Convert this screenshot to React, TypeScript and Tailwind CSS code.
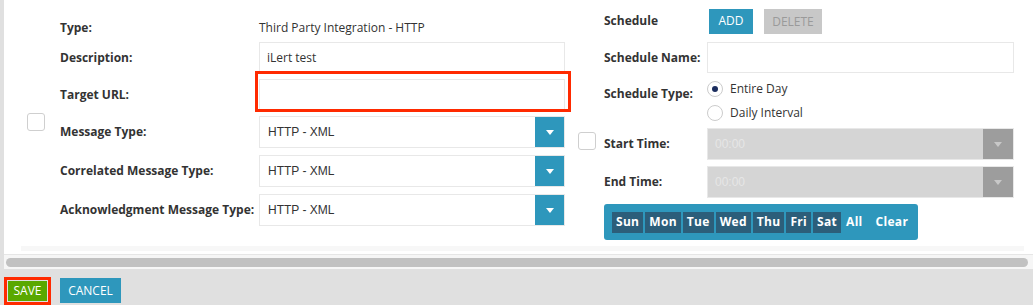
import type { ReactNode } from "react";

const font = "font-['Open_Sans',sans-serif]";

function Caret({ color = "#ffffff" }: { color?: string }) {
  return (
    <svg width="8" height="5" viewBox="0 0 8 5">
      <path d="M0 0 L8 0 L4 5 Z" fill={color} />
    </svg>
  );
}

function Checkbox() {
  return (
    <span className="block h-[18px] w-[18px] shrink-0 rounded-[3px] border border-[#cfcfcf] bg-white" />
  );
}

function Label({ children, width }: { children: ReactNode; width: string }) {
  return (
    <div className={`${width} shrink-0 text-[12px] font-bold text-[#333333]`}>
      {children}
    </div>
  );
}

function Select({ value }: { value: string }) {
  return (
    <div className="flex h-[32px] w-[306px] border border-[#e8e8e8] bg-white">
      <div className="flex flex-1 items-center pl-[8px] font-['Liberation_Sans',Arial,sans-serif] text-[12px] text-[#333333]">
        {value}
      </div>
      <div className="flex w-[29px] items-center justify-center bg-[#2e97bc]">
        <Caret />
      </div>
    </div>
  );
}

function TimeSelect() {
  return (
    <div className="flex h-[32px] w-[307px] border border-[#e8e8e8] bg-[#d5d5d5]">
      <div className="flex flex-1 items-center pl-[7px] font-['Liberation_Sans',Arial,sans-serif] text-[12px] text-[#e6e6e6]">
        00:00
      </div>
      <div className="flex w-[30px] items-center justify-center bg-[#9d9d9d]">
        <Caret color="#c8c8c8" />
      </div>
    </div>
  );
}

function Radio({ checked, label }: { checked?: boolean; label: string }) {
  return (
    <div className="flex h-[16px] items-center gap-[7px]">
      <span className="flex h-[16px] w-[16px] items-center justify-center rounded-full border border-[#cccccc] bg-white">
        {checked ? <span className="h-[6px] w-[6px] rounded-full bg-[#1b2d5e]" /> : null}
      </span>
      <span className="text-[12px] leading-[16px] text-[#333333]">{label}</span>
    </div>
  );
}

const days = ["Sun", "Mon", "Tue", "Wed", "Thu", "Fri", "Sat"];

export default function App() {
  return (
    <div className={`flex h-[305px] w-[1033px] flex-col bg-[#e0e0e0] ${font}`}>
      <div className="ml-[4px] flex h-[269px] flex-col bg-white">
        <div className="flex h-[246px]">
          {/* left form */}
          <div className="ml-[23px] mt-[113px] self-start">
            <Checkbox />
          </div>
          <div className="ml-[15px] flex flex-col pt-[14px]">
            <div className="flex h-[28px] items-center">
              <Label width="w-[199px]">Type:</Label>
              <span className="text-[12px] text-[#333333]">Third Party Integration - HTTP</span>
            </div>
            <div className="flex h-[32px] items-center">
              <Label width="w-[199px]">Description:</Label>
              <div className="flex h-[32px] w-[306px] items-center border border-[#e8e8e8] pl-[7px] text-[12px] text-[#333333]">
                iLert test
              </div>
            </div>
            <div className="mt-[5px] flex h-[32px] items-center">
              <Label width="w-[199px]">Target URL:</Label>
              <div className="relative h-[32px] w-[306px] border border-[#e8e8e8]">
                <div className="absolute -bottom-[2px] -left-[5px] -right-[7px] -top-[9px] border-[3px] border-[#ff2a00]" />
              </div>
            </div>
            <div className="mt-[5px] flex items-center">
              <Label width="w-[199px]">Message Type:</Label>
              <Select value="HTTP - XML" />
            </div>
            <div className="mt-[7px] flex items-center">
              <Label width="w-[199px]">Correlated Message Type:</Label>
              <Select value="HTTP - XML" />
            </div>
            <div className="mt-[7px] flex items-center">
              <Label width="w-[199px]">Acknowledgment Message Type:</Label>
              <Select value="HTTP - XML" />
            </div>
          </div>

          {/* right form */}
          <div className="ml-[13px] mt-[132px] self-start">
            <Checkbox />
          </div>
          <div className="ml-[8px] flex flex-col pt-[8px]">
            <div className="flex h-[26px] items-center">
              <Label width="w-[105px]">Schedule</Label>
              <button className="h-[25px] w-[44px] bg-[#2e97bc] text-[12px] text-white">ADD</button>
              <button className="ml-[11px] mt-[1px] h-[25px] w-[58px] bg-[#c8c8c8] text-[12px] text-[#9a9a9a]">
                DELETE
              </button>
            </div>
            <div className="mt-[8px] flex items-center">
              <Label width="w-[103px]">Schedule Name:</Label>
              <div className="h-[31px] w-[307px] border border-[#e8e8e8]" />
            </div>
            <div className="mt-[8px] flex items-start">
              <div className="mt-[4px] leading-[17px]">
                <Label width="w-[103px]">Schedule Type:</Label>
              </div>
              <div className="flex flex-col gap-[8px]">
                <Radio checked label="Entire Day" />
                <Radio label="Daily Interval" />
              </div>
            </div>
            <div className="mt-[7px] flex items-center">
              <Label width="w-[103px]">Start Time:</Label>
              <TimeSelect />
            </div>
            <div className="mt-[6px] flex items-center">
              <Label width="w-[103px]">End Time:</Label>
              <TimeSelect />
            </div>
            <div className="mt-[6px] flex h-[36px] w-[314px] items-center gap-[2px] rounded-[3px] bg-[#2e97bc] pl-[8px]">
              {days.map((d) => (
                <span
                  key={d}
                  className="flex h-[21px] items-center bg-[#2c5e7a] px-[4px] text-[12px] font-bold tracking-[0.3px] text-white"
                >
                  {d}
                </span>
              ))}
              <span className="flex h-[21px] items-center px-[3px] text-[12px] font-bold tracking-[0.3px] text-white">
                All
              </span>
              <span className="ml-[5px] flex h-[21px] items-center px-[3px] text-[12px] font-bold tracking-[0.3px] text-white">
                Clear
              </span>
            </div>
          </div>
        </div>
        <div className="ml-[17px] mr-[9px] h-[5px] bg-[#f7f7f7]" />
        <div className="mt-[3px] border-t border-[#e6e6e6]" />
        <div className="flex h-[14px] items-center bg-[#f6f6f6] pl-[2px] pr-[5px]">
          <div className="h-[9px] flex-1 rounded-full bg-[#c1c1c1]" />
        </div>
      </div>

      {/* footer */}
      <div className="flex items-start pl-[4px] pt-[8px]">
        <div className="flex border-[3px] border-[#ff2a00] p-[1px]">
          <button className="flex h-[20px] w-[39px] items-center justify-center bg-[#5aa800] text-[12px] text-white">
            SAVE
          </button>
        </div>
        <button className="ml-[9px] mt-[1px] flex h-[25px] w-[61px] items-center justify-center bg-[#2e97bc] text-[12px] text-white">
          CANCEL
        </button>
      </div>
    </div>
  );
}
